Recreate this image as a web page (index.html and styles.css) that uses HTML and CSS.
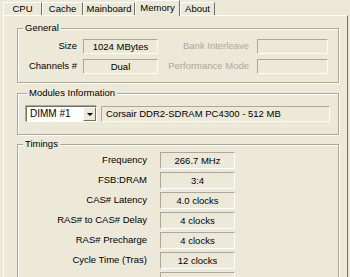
FILE: index.html
```html
<!DOCTYPE html>
<html lang="en">
<head>
<meta charset="UTF-8">
<meta name="viewport" content="width=device-width, initial-scale=1.0">
<title>CPU-Z Memory</title>
<link rel="stylesheet" href="styles.css">
</head>
<body>

<div class="window">

<div class="tabs">
<div class="tab t-cpu">CPU</div>
<div class="tab t-cache">Cache</div>
<div class="tab t-main">Mainboard</div>
<div class="tab t-mem active">Memory</div>
<div class="tab t-about">About</div>
</div>

<div class="panel">

<fieldset class="group general">
<legend>General</legend>
<div class="general-grid">
<span class="label">Size</span>
<span class="field">1024 MBytes</span>
<span class="label off">Bank Interleave</span>
<span class="field"></span>
<span class="label">Channels #</span>
<span class="field">Dual</span>
<span class="label off">Performance Mode</span>
<span class="field"></span>
</div>
</fieldset>

<fieldset class="group modules">
<legend>Modules Information</legend>
<div class="modules-row">
<div class="combo">
<span class="combo-text">DIMM #1</span>
<span class="combo-btn"><span class="arrow"></span></span>
</div>
<div class="field wide">Corsair DDR2-SDRAM PC4300 - 512 MB</div>
</div>
</fieldset>

<fieldset class="group timings">
<legend>Timings</legend>
<div class="timings-grid">
<span class="label">Frequency</span><span class="field">266.7 MHz</span>
<span class="label">FSB:DRAM</span><span class="field">3:4</span>
<span class="label">CAS# Latency</span><span class="field">4.0 clocks</span>
<span class="label">RAS# to CAS# Delay</span><span class="field">4 clocks</span>
<span class="label">RAS# Precharge</span><span class="field">4 clocks</span>
<span class="label">Cycle Time (Tras)</span><span class="field">12 clocks</span>
<span class="label"></span><span class="field"></span>
</div>
</fieldset>

</div>
</div>

</body>
</html>
```

FILE: styles.css
```css
body {
    margin: 0;
    width: 350px;
    height: 277px;
    overflow: hidden;
    background: #ece9d8;
    color: #000;
    font-family: "Liberation Sans", Arial, sans-serif;
    font-size: 9.5px;
}

.window {
    height: 277px;
    overflow: hidden;
    padding: 0 2px 0 3px;
}

/* tab strip */
.tabs {
    display: flex;
    align-items: flex-end;
    height: 15px;
}

.tab {
    box-sizing: border-box;
    height: 13px;
    line-height: 12px;
    text-align: center;
    border-top: 1px solid #fff;
    border-left: 1px solid #fff;
    border-right: 1px solid #716f64;
}

.t-cpu { width: 39px; }
.t-cache { width: 41px; }
.t-main { width: 52px; }
.t-mem { width: 45px; }
.t-about { width: 35px; }

.tab.active {
    height: 16px;
    line-height: 14px;
    margin-bottom: -1px;
    position: relative;
    z-index: 1;
    background: #ece9d8;
}

/* page */
.panel {
    height: 261px;
    overflow: hidden;
    padding: 6px 8px 0 13px;
    border-top: 1px solid #fff;
    border-left: 1px solid #fff;
    border-right: 1px solid #716f64;
}

.group {
    margin: 0;
    min-width: 0;
    border: 1px solid #aca899;
    box-shadow: inset 1px 1px 0 #fff, 1px 1px 0 #fff;
}

.group legend {
    padding: 0 2px;
    margin-left: 1px;
    line-height: 12px;
    background: #ece9d8;
}

.label {
    text-align: right;
    white-space: nowrap;
}

.label.off {
    color: #aca899;
}

.field {
    box-sizing: border-box;
    text-align: center;
    white-space: nowrap;
    border-top: 1px solid #aca899;
    border-left: 1px solid #aca899;
    border-bottom: 1px solid #fff;
    border-right: 1px solid #fff;
}

/* general */
.general {
    padding: 5px 8px 8px 4px;
}

.general-grid {
    display: grid;
    grid-template-columns: 61px 75px 99px 71px;
    grid-auto-rows: 15px;
    row-gap: 5px;
    line-height: 13px;
}

.general-grid .label {
    padding-right: 6px;
}

.general-grid .label.off {
    padding-right: 8px;
}

/* modules */
.modules {
    margin-top: 4px;
    padding: 7px 8px 12px 8px;
}

.modules-row {
    display: flex;
    gap: 4px;
    height: 16px;
}

.combo {
    box-sizing: border-box;
    width: 71px;
    display: flex;
    background: #fff;
    border-top: 1px solid #716f64;
    border-left: 1px solid #716f64;
    border-bottom: 1px solid #fff;
    border-right: 1px solid #fff;
    box-shadow: -1px -1px 0 #aca899;
}

.combo-text {
    flex: 1;
    padding-left: 3px;
    line-height: 14px;
    font-size: 10px;
}

.combo-btn {
    box-sizing: border-box;
    width: 13px;
    display: flex;
    align-items: center;
    justify-content: center;
    background: #ece9d8;
    border-top: 1px solid #fff;
    border-left: 1px solid #fff;
    border-bottom: 1px solid #716f64;
    border-right: 1px solid #716f64;
}

.arrow {
    width: 0;
    height: 0;
    border-left: 3px solid transparent;
    border-right: 3px solid transparent;
    border-top: 3px solid #000;
}

.field.wide {
    flex: 1;
    text-align: left;
    padding-left: 4px;
    line-height: 14px;
}

/* timings */
.timings {
    margin-top: 3px;
    padding: 2px 8px 10px 4px;
}

.timings-grid {
    display: grid;
    grid-template-columns: 138px 75px;
    grid-auto-rows: 17px;
    row-gap: 3px;
    line-height: 15px;
}

.timings-grid .label {
    padding-right: 13px;
}
```
